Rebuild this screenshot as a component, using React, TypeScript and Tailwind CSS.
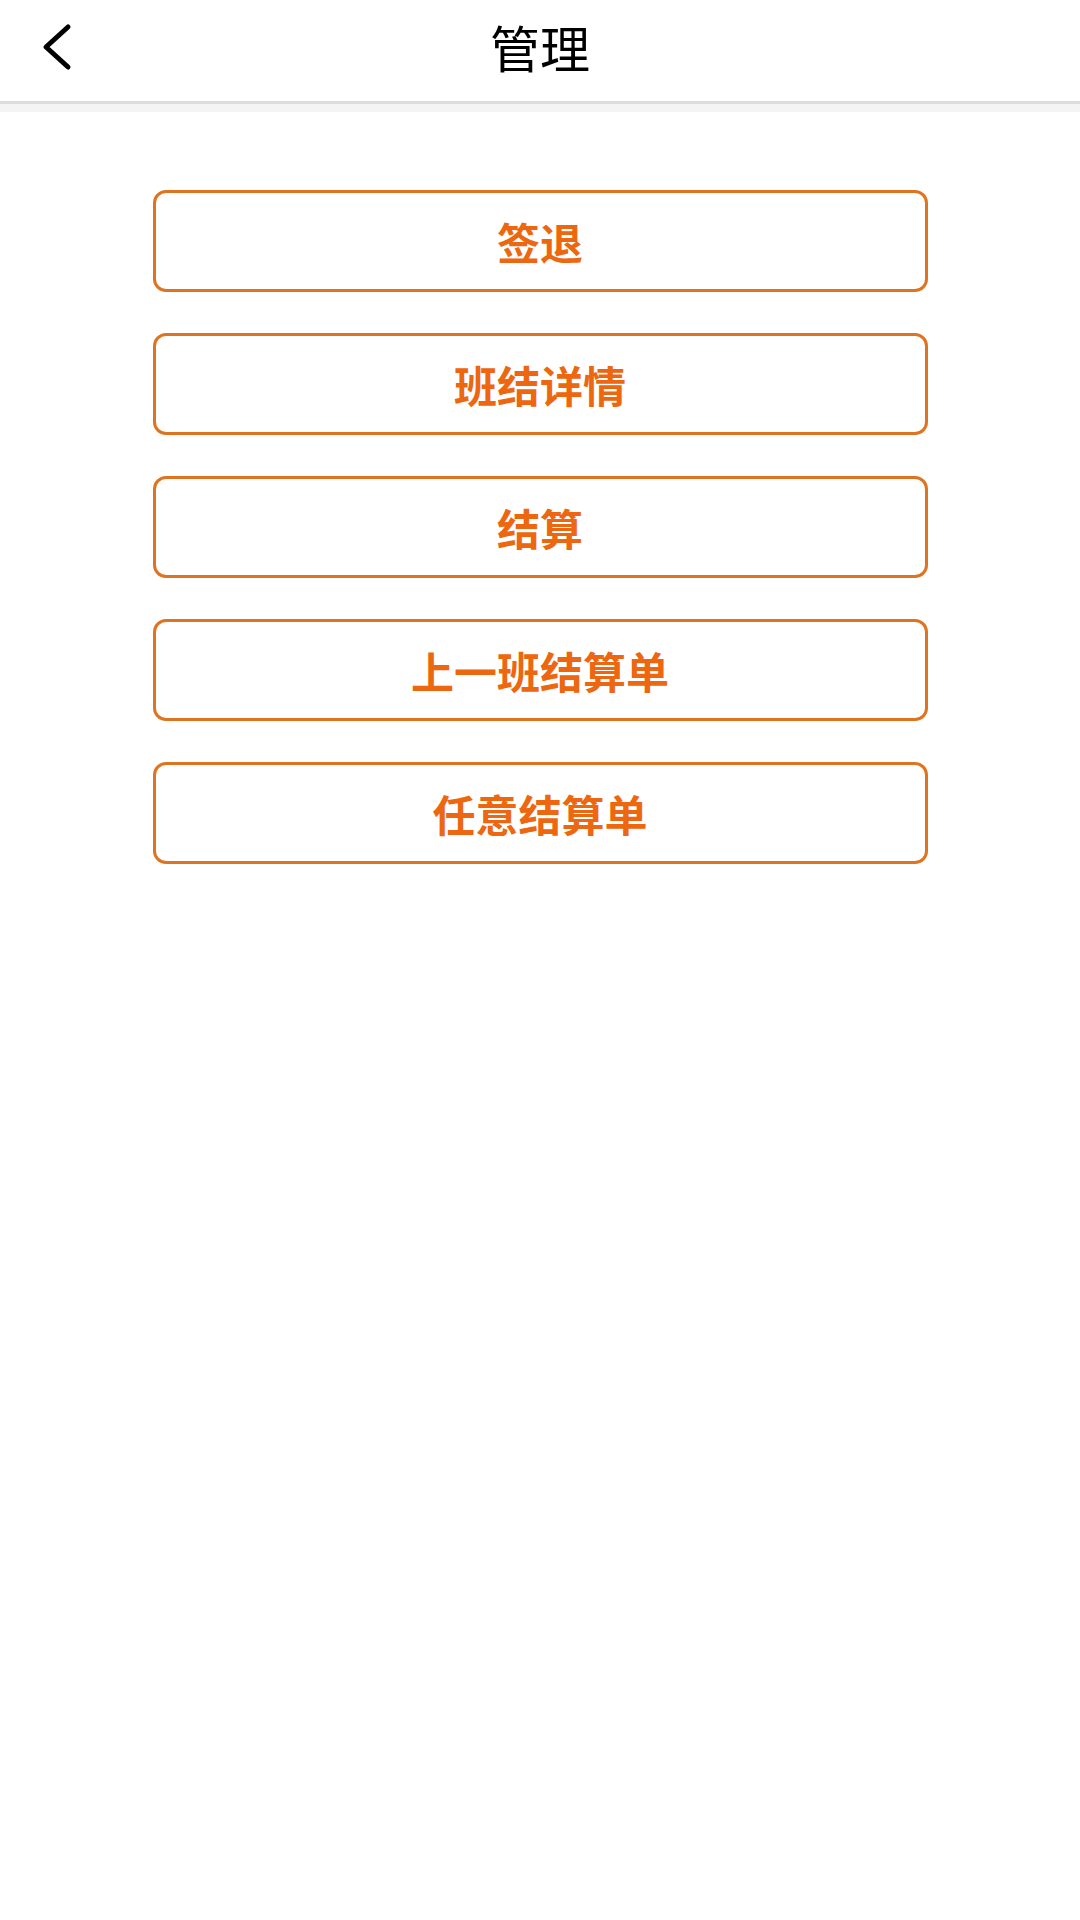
const items = ['签退', '班结详情', '结算', '上一班结算单', '任意结算单'];

function BackArrow() {
  return (
    <svg width="40" height="56" viewBox="0 0 40 56" fill="none">
      <polyline
        points="30,8 8,28 30,48"
        stroke="#000"
        strokeWidth="5"
        strokeLinecap="round"
        strokeLinejoin="round"
      />
    </svg>
  );
}

export default function App() {
  return (
    <div className="min-h-[1920px] bg-white font-['Noto_Sans_CJK_SC','Noto_Sans',sans-serif]">
      <header className="relative flex h-[104px] items-center justify-center border-b-[3px] border-[#dcdcdc] bg-white pb-[10px]">
        <button className="absolute left-[38px] top-[19px]">
          <BackArrow />
        </button>
        <h1 className="text-[50px] leading-none text-black">管理</h1>
      </header>
      <div className="h-[8px] bg-[#f4f4f4]" />

      <div className="flex flex-col items-center gap-[41px] pt-[78px]">
        {items.map((label) => (
          <button
            key={label}
            className="flex h-[102px] w-[775px] items-center justify-center rounded-[13px] border-[3px] border-[#de7421] bg-white text-[43px] font-bold text-[#ec6710]"
          >
            {label}
          </button>
        ))}
      </div>
    </div>
  );
}
